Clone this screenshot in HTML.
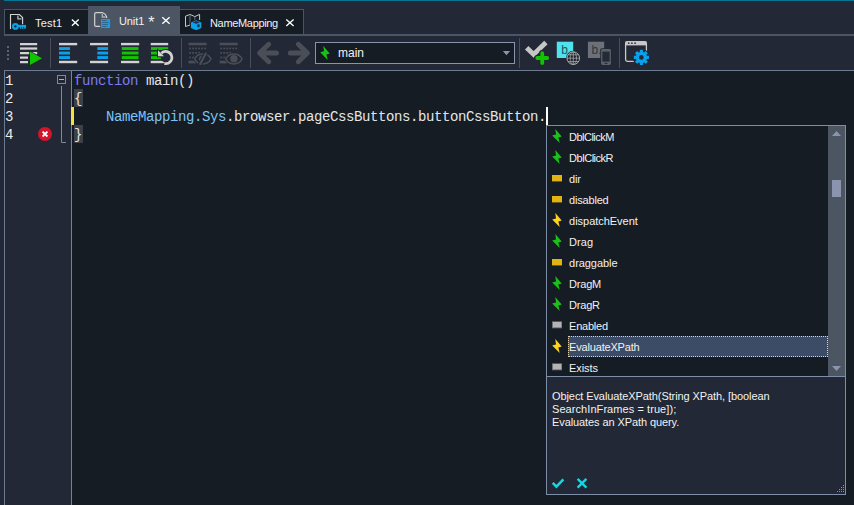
<!DOCTYPE html>
<html>
<head>
<meta charset="utf-8">
<title>Unit1</title>
<style>
html,body{margin:0;padding:0;}
body{width:854px;height:505px;overflow:hidden;position:relative;background:#222835;font-family:"Liberation Sans",sans-serif;font-size:11px;color:#e6e6e6;}
.abs{position:absolute;}
#topbar{left:4px;top:0;width:850px;height:1px;background:#04768f;}
#leftstrip{left:0;top:0;width:4px;height:505px;background:#222835;}
.tab{position:absolute;box-sizing:border-box;}
#tab1{left:4px;top:9px;width:84px;height:25px;background:#161c24;border:1px solid #4a5462;border-bottom:none;border-right:none;}
#tab2{left:88px;top:6px;width:92px;height:29px;background:#4b5563;}
#tab3{left:180px;top:9px;width:124px;height:25px;background:#161c24;border:1px solid #4a5462;border-left:none;border-bottom:none;}
#tabline{left:4px;top:34px;width:850px;height:2px;background:#4b5563;}
.tabtxt{position:absolute;font-size:11px;line-height:13px;color:#f2f2f2;white-space:nowrap;}
.sep{position:absolute;top:38px;width:1px;height:30px;background:#4a4e56;}
#combo{left:315px;top:42px;width:200px;height:22px;box-sizing:border-box;border:1px solid #8694ae;background:#161c24;}
#combotxt{left:338px;top:46px;font-size:12px;line-height:14px;color:#f2f2f2;}
#edborder{left:4px;top:70px;width:850px;height:435px;box-sizing:border-box;border-top:1px solid #6c7a90;border-left:1px solid #6c7a90;background:#222835;}
#code{left:72px;top:71px;width:782px;height:434px;background:#161c24;}
#gutsep{left:71px;top:71px;width:1px;height:434px;background:#7484a0;}
.ln,.cl{position:absolute;font-family:"Liberation Mono",monospace;font-size:14px;letter-spacing:-0.4014px;line-height:18px;height:18px;white-space:pre;}
.ln{left:5px;color:#ececec;}
.cl{left:74px;color:#e6e6e6;}
.kw{color:#7c7cf0;}
.nm{color:#7cc4f4;}
.brh{left:74px;width:9px;height:18px;background:#3c4048;}
#popup{left:546px;top:125px;width:300px;height:370px;box-sizing:border-box;border:1px solid #7e8ea8;background:#161c24;}
#list{left:0;top:0;width:281px;height:250px;overflow:hidden;}
.it{position:absolute;left:22.1px;height:21px;line-height:21px;font-size:11px;color:#f2f2f2;white-space:nowrap;}
#sel{left:21px;width:260px;height:21px;box-sizing:border-box;background:#3c4c66;border:1px dotted #e6d2a8;}
#sb{left:281px;top:0;width:17px;height:250px;background:#4c5562;}
#desc{left:0;top:251px;width:298px;height:117px;background:#222835;}
#descsep{left:0;top:250px;width:298px;height:1px;background:#7e8ea8;}
#desctxt{left:5px;top:13px;width:290px;font-size:11px;line-height:13px;color:#f2f2f2;letter-spacing:-0.09px;white-space:nowrap;}
#icons{left:0;top:0;}
</style>
</head>
<body>
<div class="abs" id="leftstrip"></div>
<div class="abs" id="topbar"></div>

<div class="tab" id="tab1"></div>
<div class="tab" id="tab2"></div>
<div class="tab" id="tab3"></div>
<div class="abs" id="tabline"></div>
<span class="tabtxt" id="t1" style="left:35px;top:17px;letter-spacing:0.2px">Test1</span>
<span class="tabtxt" id="t2" style="left:119px;top:15px;letter-spacing:-0.1px">Unit1</span>
<span class="tabtxt" id="t2s" style="left:148.2px;top:15px;font-size:16px;line-height:16px;">*</span>
<span class="tabtxt" id="t3" style="left:210px;top:17px;letter-spacing:-0.33px">NameMapping</span>

<div class="sep" style="left:50px"></div>
<div class="sep" style="left:181px"></div>
<div class="sep" style="left:250px"></div>
<div class="sep" style="left:519px"></div>
<div class="sep" style="left:619px"></div>
<div class="abs" id="combo"></div>
<span class="abs" id="combotxt">main</span>

<div class="abs" id="edborder"></div>
<div class="abs" id="code"></div>
<div class="abs" id="gutsep"></div>
<div class="abs brh" style="top:89px"></div>
<div class="abs brh" style="top:125px"></div>
<span class="ln" style="top:72px">1</span>
<span class="ln" style="top:90px">2</span>
<span class="ln" style="top:108px">3</span>
<span class="ln" style="top:126px">4</span>
<div class="cl" id="c1" style="top:72px"><span class="kw">function</span> main()</div>
<div class="cl" id="c2" style="top:90px">{</div>
<div class="cl" id="c3" style="top:108px">    <span class="nm">NameMapping.Sys</span>.browser.pageCssButtons.buttonCssButton.</div>
<div class="cl" id="c4" style="top:126px">}</div>
<div class="abs" style="left:71px;top:107px;width:3px;height:18px;background:#f2e23e;"></div>
<div class="abs" style="left:546px;top:107px;width:2px;height:18px;background:#fff;"></div>

<div class="abs" id="popup">
  <div class="abs" id="list">
    <span class="it" style="top:1px;letter-spacing:-0.533px">DblClickM</span>
    <span class="it" style="top:22px;letter-spacing:-0.476px">DblClickR</span>
    <span class="it" style="top:43px;letter-spacing:-0.21px">dir</span>
    <span class="it" style="top:64px;letter-spacing:-0.197px">disabled</span>
    <span class="it" style="top:85px;letter-spacing:-0.032px">dispatchEvent</span>
    <span class="it" style="top:106px;letter-spacing:0.04px">Drag</span>
    <span class="it" style="top:127px;letter-spacing:-0.06px">draggable</span>
    <span class="it" style="top:148px;letter-spacing:-0.224px">DragM</span>
    <span class="it" style="top:169px;letter-spacing:-0.22px">DragR</span>
    <span class="it" style="top:190px;letter-spacing:-0.239px">Enabled</span>
    <div class="abs" id="sel" style="top:210px"></div>
    <span class="it" style="top:211px;letter-spacing:-0.183px">EvaluateXPath</span>
    <span class="it" style="top:232px;letter-spacing:-0.107px">Exists</span>
  </div>
  <div class="abs" id="sb"></div>
  <div class="abs" id="descsep"></div>
  <div class="abs" id="desc">
    <div class="abs" id="desctxt"><span id="d1">Object EvaluateXPath(String XPath, [boolean</span><br><span style="letter-spacing:0.07px">SearchInFrames = true]);</span><br>Evaluates an XPath query.</div>
  </div>
</div>

<svg class="abs" id="icons" width="854" height="505" viewBox="0 0 854 505">
<path d="M10.5 29 V14.5 H19.4 L22.6 17.6 V24.3" fill="none" stroke="#d2d2d2" stroke-width="1.15"/>
<path d="M17.9 15.4 V18.9 H21.6" fill="none" stroke="#b8b8b8" stroke-width="1.3"/>
<circle cx="15.4" cy="26.4" r="3.9" fill="#161c24"/>
<circle cx="15.4" cy="26.4" r="2.3" fill="none" stroke="#0aa0ea" stroke-width="2.3"/>
<rect x="18" y="24.9" width="8.1" height="2.1" fill="#0aa0ea"/>
<rect x="19.8" y="26" width="1.5" height="2.8" fill="#0aa0ea"/><rect x="21.9" y="26" width="1.5" height="2.8" fill="#0aa0ea"/><rect x="24" y="26" width="1.8" height="2.6" fill="#0aa0ea"/>
<path d="M100.5 26.4 H96 Q94.7 26.4 94.7 25.2 V13.9 Q94.7 12.7 96 12.7 H102.6 Q105.6 13.6 106.6 16.6 V18.2" fill="none" stroke="#d2d2d2" stroke-width="1.2"/>
<path d="M102.3 14 V17 H105.6" fill="none" stroke="#b0b0b0" stroke-width="1.3"/>
<rect x="100.2" y="18.2" width="10.6" height="10.6" fill="#4b5563"/>
<rect x="101" y="19" width="9.1" height="9.1" fill="#0aa0ea"/>
<rect x="102.2" y="20.0" width="4.5" height="0.85" fill="#3e5a78"/>
<rect x="102.2" y="22.1" width="6.5" height="0.85" fill="#3e5a78"/>
<rect x="102.2" y="24.0" width="5.6" height="0.85" fill="#3e5a78"/>
<rect x="102.2" y="26.1" width="4.5" height="0.85" fill="#3e5a78"/>
<path d="M185.5 26.6 V16.2 L190 14.4 L194.8 16.6 L199.6 14.4 V20 M185.5 26.5 L190 25" fill="none" stroke="#c8c8c8" stroke-width="1"/>
<path d="M190 14.6 V25" fill="none" stroke="#6a6e76" stroke-width="1"/>
<path d="M194.8 16.8 V20" fill="none" stroke="#6a6e76" stroke-width="1"/>
<path d="M196.1 19.4 L202 22 V28.3 L196.1 31 L190.2 28.3 V22 Z" fill="#161c24"/>
<path d="M196.1 20.2 L201.3 22.4 V27.9 L196.1 30.2 L190.9 27.9 V22.4 Z" fill="#0aa0ea"/>
<path d="M192.6 22.4 L196.1 21 L199.6 22.4 L196.1 23.7 Z" fill="#15324a"/>
<rect x="197.3" y="24.4" width="2.3" height="2.7" fill="#15324a"/>
<path d="M71.9 19.4 L78.7 25.8 M78.7 19.4 L71.9 25.8" stroke="#ffffff" stroke-width="1.35" fill="none"/>
<path d="M162.3 17.3 L169.6 23.7 M169.6 17.3 L162.3 23.7" stroke="#ffffff" stroke-width="1.35" fill="none"/>
<path d="M286.3 19.6 L293.6 26.0 M293.6 19.6 L286.3 26.0" stroke="#ffffff" stroke-width="1.35" fill="none"/>
<rect x="7" y="46" width="2" height="2" fill="#56647c"/>
<rect x="7" y="50" width="2" height="2" fill="#56647c"/>
<rect x="7" y="54" width="2" height="2" fill="#56647c"/>
<rect x="7" y="58" width="2" height="2" fill="#56647c"/>
<rect x="20" y="43" width="17.2" height="2.25" fill="#d2d2d2"/>
<rect x="20" y="47.4" width="17.2" height="2.25" fill="#d2d2d2"/>
<rect x="20" y="52" width="17.2" height="2.25" fill="#d2d2d2"/>
<rect x="20" y="56.5" width="8.0" height="2.25" fill="#d2d2d2"/>
<rect x="20" y="61" width="8.0" height="2.25" fill="#d2d2d2"/>
<path d="M29.2 50.2 L43.4 58.3 L29.2 66.4 Z" fill="#222835"/>
<path d="M30 51.5 L42 58.3 L30 65 Z" fill="#12c400"/>
<rect x="59" y="42.9" width="18.2" height="2.4" fill="#d2d2d2"/>
<rect x="59" y="60.8" width="18.2" height="2.4" fill="#d2d2d2"/>
<rect x="59" y="47.1" width="11.0" height="2.9" fill="#0aa0ea"/>
<rect x="59" y="51.6" width="11.0" height="2.9" fill="#0aa0ea"/>
<rect x="59" y="56.1" width="11.0" height="2.9" fill="#0aa0ea"/>
<rect x="90" y="42.9" width="18.1" height="2.4" fill="#d2d2d2"/>
<rect x="90" y="60.8" width="18.1" height="2.4" fill="#d2d2d2"/>
<rect x="97.3" y="47.1" width="10.8" height="2.9" fill="#0aa0ea"/>
<rect x="97.3" y="51.6" width="10.8" height="2.9" fill="#0aa0ea"/>
<rect x="97.3" y="56.1" width="10.8" height="2.9" fill="#0aa0ea"/>
<rect x="121" y="42.9" width="18.2" height="2.4" fill="#d2d2d2"/>
<rect x="121" y="60.8" width="18.2" height="2.4" fill="#d2d2d2"/>
<rect x="121.8" y="47.1" width="16.7" height="2.9" fill="#12c400"/>
<rect x="121.8" y="51.6" width="16.7" height="2.9" fill="#12c400"/>
<rect x="121.8" y="56.1" width="16.7" height="2.9" fill="#12c400"/>
<rect x="150.7" y="42.9" width="17.5" height="2.4" fill="#d2d2d2"/>
<rect x="150.7" y="60.8" width="17.5" height="2.4" fill="#d2d2d2"/>
<rect x="151" y="47.1" width="17.2" height="2.9" fill="#12c400"/>
<rect x="151" y="51.6" width="17.2" height="2.9" fill="#12c400"/>
<rect x="151" y="56.1" width="17.2" height="2.9" fill="#12c400"/>
<path d="M161.6 53 A6.1 6.1 0 1 1 164.4 63.5" fill="none" stroke="#222835" stroke-width="4.9"/>
<path d="M157 48.2 V57.2 H166 Z" fill="#222835"/>
<circle cx="165.7" cy="57.5" r="4.9" fill="#222835"/>
<path d="M161.4 53.3 A6.1 6.1 0 1 1 164.4 63.5" fill="none" stroke="#d2d2d2" stroke-width="2.7"/>
<path d="M158 50.2 V56.2 H164 Z" fill="#d2d2d2"/>
<rect x="188.5" y="42.7" width="18.1" height="2.6" fill="#4a4e56"/>
<rect x="189.2" y="47.6" width="1.8" height="1.7" fill="#4a4e56"/>
<rect x="192.2" y="47.6" width="1.8" height="1.7" fill="#4a4e56"/>
<rect x="195.2" y="47.6" width="1.8" height="1.7" fill="#4a4e56"/>
<rect x="198.2" y="47.6" width="1.8" height="1.7" fill="#4a4e56"/>
<rect x="201.2" y="47.6" width="1.8" height="1.7" fill="#4a4e56"/>
<rect x="204.2" y="47.6" width="1.8" height="1.7" fill="#4a4e56"/>
<rect x="189.2" y="52" width="1.8" height="1.8" fill="#4a4e56"/>
<rect x="192.2" y="52" width="1.8" height="1.8" fill="#4a4e56"/>
<rect x="195.2" y="52" width="1.8" height="1.8" fill="#4a4e56"/>
<rect x="198.2" y="52" width="1.8" height="1.8" fill="#4a4e56"/>
<rect x="189.2" y="56.6" width="1.8" height="1.7" fill="#4a4e56"/>
<rect x="192.2" y="56.6" width="1.8" height="1.7" fill="#4a4e56"/>
<rect x="188.5" y="60.7" width="8" height="2.7" fill="#4a4e56"/>
<ellipse cx="202.8" cy="58.9" rx="9.3" ry="6.4" fill="#222835"/>
<path d="M194.6 58.9 C197.8 52.2 207.8 52.2 211.0 58.9 C207.8 65.6 197.8 65.6 194.6 58.9 Z" fill="none" stroke="#4a4e56" stroke-width="1.5"/>
<path d="M202.6 55.3 A3.6 3.6 0 0 0 200.6 62 Z" fill="#4a4e56"/>
<path d="M206.2 52.8 L199.8 64.8" stroke="#222835" stroke-width="4.5" fill="none"/>
<path d="M206.2 52.8 L199.8 64.8" stroke="#4a4e56" stroke-width="2.2" fill="none"/>
<rect x="219.6" y="42.7" width="18.1" height="2.6" fill="#4a4e56"/>
<rect x="220.3" y="47.6" width="1.8" height="1.7" fill="#4a4e56"/>
<rect x="223.3" y="47.6" width="1.8" height="1.7" fill="#4a4e56"/>
<rect x="226.3" y="47.6" width="1.8" height="1.7" fill="#4a4e56"/>
<rect x="229.3" y="47.6" width="1.8" height="1.7" fill="#4a4e56"/>
<rect x="232.3" y="47.6" width="1.8" height="1.7" fill="#4a4e56"/>
<rect x="235.3" y="47.6" width="1.8" height="1.7" fill="#4a4e56"/>
<rect x="220.3" y="52" width="1.8" height="1.8" fill="#4a4e56"/>
<rect x="223.3" y="52" width="1.8" height="1.8" fill="#4a4e56"/>
<rect x="226.3" y="52" width="1.8" height="1.8" fill="#4a4e56"/>
<rect x="229.3" y="52" width="1.8" height="1.8" fill="#4a4e56"/>
<rect x="220.3" y="56.6" width="1.8" height="1.7" fill="#4a4e56"/>
<rect x="223.3" y="56.6" width="1.8" height="1.7" fill="#4a4e56"/>
<rect x="219.6" y="60.7" width="8" height="2.7" fill="#4a4e56"/>
<ellipse cx="233.9" cy="58.9" rx="9.3" ry="6.4" fill="#222835"/>
<path d="M225.7 58.9 C228.9 52.2 238.9 52.2 242.1 58.9 C238.9 65.6 228.9 65.6 225.7 58.9 Z" fill="none" stroke="#4a4e56" stroke-width="1.5"/>
<circle cx="233.9" cy="58.7" r="3.7" fill="#4a4e56"/>
<path d="M276.5 53 H260.5 M268.7 44.3 L259.6 53 L268.7 61.7" fill="none" stroke="#4a4e56" stroke-width="5" stroke-linecap="round" stroke-linejoin="round"/>
<path d="M290.3 53 H306.5 M298.3 44.3 L307.4 53 L298.3 61.7" fill="none" stroke="#4a4e56" stroke-width="5" stroke-linecap="round" stroke-linejoin="round"/>
<defs><path id="bolt" d="M323.3 46 L329.7 53.5 L326.4 54.5 L327.7 59.9 L320.2 52.3 L324 51.3 Z"/></defs>
<use href="#bolt" fill="#1cc01a"/>
<path d="M502.9 51 H510.1 L506.5 55.2 Z" fill="#8a94b0"/>
<path d="M526.7 47.65 L533.6 54.4 L545.9 42.6" fill="none" stroke="#c6c6c6" stroke-width="4.9" stroke-linejoin="miter"/>
<path d="M537.3 58 H547.2 M542.25 53.2 V63.1" stroke="#222835" stroke-width="6.2" stroke-linecap="round" fill="none"/>
<path d="M537.3 58 H547.2 M542.25 53.2 V63.1" stroke="#12c400" stroke-width="3.8" stroke-linecap="round" fill="none"/>
<rect x="556.8" y="41.7" width="16.4" height="16.3" fill="#4fe3ec"/>
<text x="561.3" y="53.6" font-family="Liberation Sans, sans-serif" font-size="12" fill="#1d5562">b</text>
<circle cx="573.3" cy="58.2" r="7.4" fill="#222835"/>
<circle cx="573.3" cy="58.2" r="6.3" fill="#1c212b" stroke="#bdbdbd" stroke-width="0.9"/>
<path d="M573.3 51.9 V64.5 M567 58.2 H579.6 M568 54.8 H578.6 M568 61.6 H578.6" stroke="#a8a8a8" stroke-width="0.8" fill="none"/>
<ellipse cx="573.3" cy="58.2" rx="3.2" ry="6.3" fill="none" stroke="#a8a8a8" stroke-width="0.8"/>
<rect x="587.9" y="41.7" width="16.3" height="16.3" fill="#6c7078"/>
<text x="591.6" y="53.6" font-family="Liberation Sans, sans-serif" font-size="12" fill="#30353f">b.</text>
<rect x="600.2" y="48.2" width="11.6" height="17.6" rx="1.6" fill="#222835"/>
<rect x="601.1" y="49.1" width="9.8" height="15.8" rx="1.4" fill="#5c6068"/>
<rect x="602.4" y="51.6" width="7.2" height="10" fill="#242a36"/>
<rect x="604.6" y="62.9" width="2.8" height="1" fill="#242a36"/>
<rect x="625.6" y="41.6" width="20.8" height="19.8" rx="1.8" fill="none" stroke="#c8c8c8" stroke-width="1.3"/>
<rect x="625.6" y="41.6" width="20.8" height="3.8" fill="#c8c8c8"/>
<rect x="627.9" y="42.4" width="1.6" height="1.6" fill="#3a3f4a"/>
<rect x="631.1" y="42.4" width="1.6" height="1.6" fill="#3a3f4a"/>
<rect x="634.3" y="42.4" width="1.6" height="1.6" fill="#3a3f4a"/>
<circle cx="641.4" cy="57.4" r="8.6" fill="#222835"/>
<path d="M639.87 49.85 L642.93 49.85 L642.98 51.92 L644.16 52.41 L645.65 50.98 L647.82 53.15 L646.39 54.64 L646.88 55.82 L648.95 55.87 L648.95 58.93 L646.88 58.98 L646.39 60.16 L647.82 61.65 L645.65 63.82 L644.16 62.39 L642.98 62.88 L642.93 64.95 L639.87 64.95 L639.82 62.88 L638.64 62.39 L637.15 63.82 L634.98 61.65 L636.41 60.16 L635.92 58.98 L633.85 58.93 L633.85 55.87 L635.92 55.82 L636.41 54.64 L634.98 53.15 L637.15 50.98 L638.64 52.41 L639.82 51.92 Z M643.6999999999999 57.4 A2.3 2.3 0 1 0 639.1 57.4 A2.3 2.3 0 1 0 643.6999999999999 57.4 Z" fill="#0aa0ea" fill-rule="evenodd"/>
<rect x="57.5" y="75.5" width="8" height="8" fill="none" stroke="#7c8a9c" stroke-width="1"/>
<rect x="59" y="79" width="5" height="1" fill="#aab4c2"/>
<path d="M61.5 86 V142.5 H66" fill="none" stroke="#7c8a9c" stroke-width="1"/>
<circle cx="45" cy="134" r="7" fill="#d3142b"/>
<path d="M42.6 131.7 L47.4 136.5 M47.4 131.7 L42.6 136.5" stroke="#fff" stroke-width="1.9" fill="none"/>
<use href="#bolt" transform="translate(232.0 83.1)" fill="#1cc01a"/>
<use href="#bolt" transform="translate(232.0 104.1)" fill="#1cc01a"/>
<rect x="552" y="175" width="10" height="6.4" fill="#e2b412"/>
<rect x="552" y="196" width="10" height="6.4" fill="#e2b412"/>
<use href="#bolt" transform="translate(232.0 167.1)" fill="#ffd21e"/>
<use href="#bolt" transform="translate(232.0 188.1)" fill="#1cc01a"/>
<rect x="552" y="259" width="10" height="6.4" fill="#e2b412"/>
<use href="#bolt" transform="translate(232.0 230.10000000000002)" fill="#1cc01a"/>
<use href="#bolt" transform="translate(232.0 251.10000000000002)" fill="#1cc01a"/>
<rect x="552" y="321.3" width="10" height="7" fill="#6e7278"/>
<rect x="553" y="322" width="8.3" height="5.3" fill="#b4b4b4"/>
<use href="#bolt" transform="translate(232.0 293.1)" fill="#ffd21e"/>
<rect x="552" y="363.3" width="10" height="7" fill="#6e7278"/>
<rect x="553" y="364" width="8.3" height="5.3" fill="#b4b4b4"/>
<path d="M832 136 H841 L836.5 131 Z" fill="#8a94ae"/>
<path d="M832 366 H841 L836.5 371 Z" fill="#8a94ae"/>
<rect x="832" y="180" width="9" height="17" fill="#8a94ae"/>
<rect x="843" y="485" width="1" height="1" fill="#8c9098"/>
<rect x="843" y="487" width="1" height="1" fill="#8c9098"/>
<rect x="841" y="487" width="1" height="1" fill="#8c9098"/>
<rect x="843" y="489" width="1" height="1" fill="#8c9098"/>
<rect x="841" y="489" width="1" height="1" fill="#8c9098"/>
<rect x="839" y="489" width="1" height="1" fill="#8c9098"/>
<rect x="843" y="491" width="1" height="1" fill="#8c9098"/>
<rect x="841" y="491" width="1" height="1" fill="#8c9098"/>
<rect x="839" y="491" width="1" height="1" fill="#8c9098"/>
<rect x="837" y="491" width="1" height="1" fill="#8c9098"/>
<path d="M552.7 482.9 L556.4 486.6 L563.4 479.4" fill="none" stroke="#12d6e0" stroke-width="2.6"/>
<path d="M577.6 478.8 L586.4 487.6 M586.4 478.8 L577.6 487.6" fill="none" stroke="#12d6e0" stroke-width="2.35"/>
</svg>
</body>
</html>
